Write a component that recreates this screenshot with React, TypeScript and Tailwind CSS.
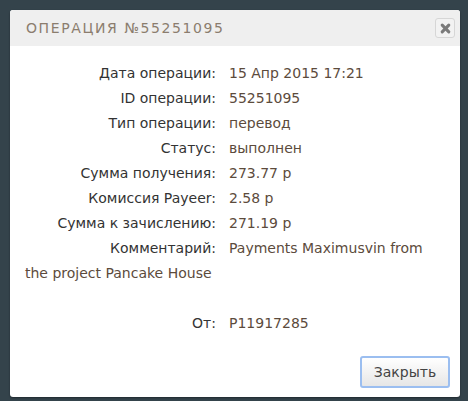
export default function App() {
  const rows: [string, string][] = [
    ['Дата операции:', '15 Апр 2015 17:21'],
    ['ID операции:', '55251095'],
    ['Тип операции:', 'перевод'],
    ['Статус:', 'выполнен'],
    ['Сумма получения:', '273.77 р'],
    ['Комиссия Payeer:', '2.58 р'],
    ['Сумма к зачислению:', '271.19 р'],
    ['Комментарий:', 'Payments Maximusvin from the project Pancake House'],
  ]

  return (
    <div className="w-[468px] h-[401px] bg-[#34434b] pt-[10px] pl-[10px]">
      <div className="w-[450px] h-[387px] bg-white rounded-[3px] flex flex-col shadow-[0_1px_2px_rgba(0,0,0,0.4)]">
        {/* Header */}
        <div className="h-[36px] bg-[#efefef] rounded-t-[3px] flex items-center justify-between pl-[16px] pr-[5px]">
          <span className="text-[14px] tracking-[1.6px] text-[#8b7d6e] font-['DejaVu_Sans',sans-serif]">
            ОПЕРАЦИЯ №55251095
          </span>
          <button
            type="button"
            className="w-[20px] h-[20px] rounded-[3px] border border-[#d6d6d6] bg-[#f2f2f2] flex items-center justify-center"
          >
            <svg width="11" height="11" viewBox="0 0 10 10" stroke="#7a7a7a" strokeWidth="2.8" strokeLinecap="round">
              <line x1="2" y1="2" x2="8" y2="8" />
              <line x1="8" y1="2" x2="2" y2="8" />
            </svg>
          </button>
        </div>

        {/* Body */}
        <div className="flex-1 pl-[15px] pr-[15px] pt-[15px] text-[14px] leading-[25px] font-['DejaVu_Sans',sans-serif]">
          {rows.map(([label, value]) => (
            <div key={label}>
              <span className="inline-block w-[191px] text-right text-[#333] mr-[13px]">{label}</span>
              <span className="text-[#5c4b3c]">{value}</span>
            </div>
          ))}
          <div className="h-[25px]" />
          <div>
            <span className="inline-block w-[191px] text-right text-[#333] mr-[13px]">От:</span>
            <span className="text-[#5c4b3c]">P11917285</span>
          </div>
        </div>

        {/* Footer */}
        <div className="flex justify-end pr-[10px] pb-[9px]">
          <button
            type="button"
            className="w-[90px] h-[32px] rounded-[3px] border-2 border-[#9bbef0] bg-gradient-to-b from-white to-[#e6e6e6] text-[14px] text-[#444] font-['DejaVu_Sans',sans-serif]"
          >
            Закрыть
          </button>
        </div>
      </div>
    </div>
  )
}
